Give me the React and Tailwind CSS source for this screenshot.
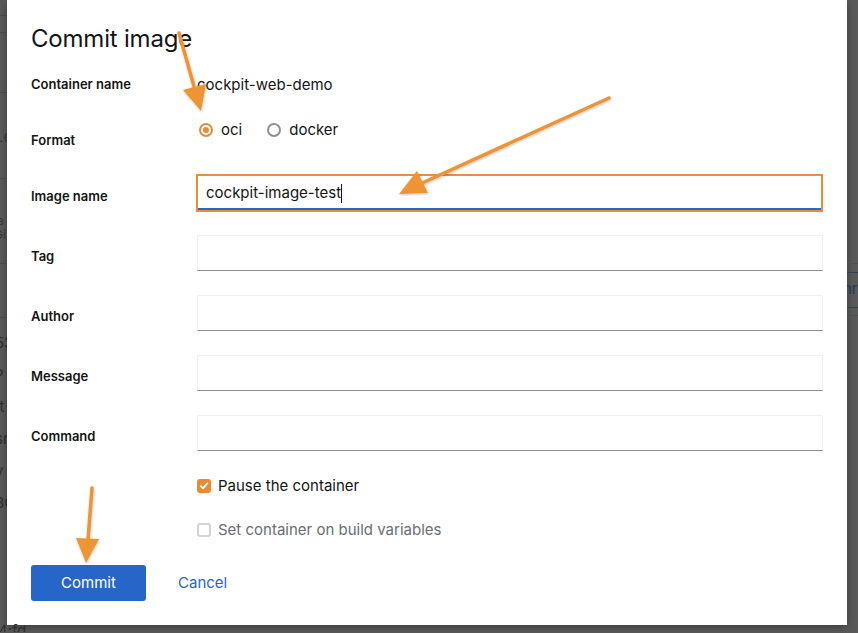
import React from 'react';

const ORANGE = '#ef9432';

function Arrows() {
    return (
        <svg
            className="absolute inset-0 pointer-events-none"
            width="858"
            height="633"
            viewBox="0 0 858 633"
        >
            <defs>
                <filter id="arrowShadow" x="-20%" y="-20%" width="140%" height="140%">
                    <feDropShadow dx="0.5" dy="1" stdDeviation="1.2" floodColor="#000" floodOpacity="0.25" />
                </filter>
            </defs>
            <g fill={ORANGE} stroke={ORANGE} strokeLinecap="round" filter="url(#arrowShadow)">
                {/* arrow to the oci radio */}
                <line x1="179" y1="33" x2="195" y2="90" strokeWidth="3.5" />
                <polygon points="201,111 206,84 183,90" stroke="none" />
                {/* arrow to the image name field */}
                <line x1="609" y1="98" x2="420" y2="184" strokeWidth="3.5" />
                <polygon points="399,194 428,193 417,171" stroke="none" />
                {/* arrow to the commit button */}
                <line x1="92" y1="488" x2="88" y2="540" strokeWidth="3.5" />
                <polygon points="86,563 99,539 76,538" stroke="none" />
            </g>
        </svg>
    );
}

// pieces of the page that show beside the modal
function LeftStrip() {
    return (
        <div className="w-[7px] shrink-0 overflow-hidden flex flex-col text-[15px] leading-5 text-[#2e2e2e]">
            <div className="mt-[15px] border-t border-[#4d4d4d]" />
            <div className="mt-[16px] border-t border-[#4d4d4d]" />
            <div className="mt-[59px] border-t border-[#4d4d4d]" />
            <div className="mt-[34px] -ml-[5px] text-[#3a3a3a]">Le</div>
            <div className="mt-[31px] border-t border-[#4d4d4d]" />
            <div className="mt-[35px] -ml-[6px] text-[12px] leading-[14px] text-[#3a3a3a] flex flex-col">
                <span>la</span>
                <span>Gi</span>
            </div>
            <div className="mt-[21px] border-t border-[#4d4d4d]" />
            <div className="mt-[53px] border-t border-[#4d4d4d]" />
            <div className="mt-[15px] flex flex-col gap-[12px] -ml-[5px]">
                <span>53</span>
                <span className="-ml-[1px]">P</span>
                <span>tt</span>
                <span>sn</span>
                <span>y</span>
                <span>3C</span>
            </div>
        </div>
    );
}

function RightStrip() {
    return (
        <div className="flex-1 overflow-hidden flex flex-col text-[15px] leading-5">
            <div className="mt-[263px] border-t border-[#4f4f4f]" />
            <div className="mt-[8px] border-t border-[#2f3f5c]" />
            <div className="mt-[6px] -ml-[4px] text-[#22375c]">nr</div>
            <div className="mt-[8px] border-t border-[#2f3f5c]" />
            <div className="mt-[7px] border-t border-[#4f4f4f]" />
        </div>
    );
}

function FieldRow({ label, value, focused }) {
    return (
        <div className="flex items-start">
            <div className={`w-[166px] shrink-0 text-[13px] leading-5 font-semibold text-[#151515] ${focused ? 'pt-[12px]' : 'pt-[11px]'}`}>
                {label}
            </div>
            {focused ? (
                <div className="-ml-[1px] w-[628px] h-[38px] border-2 border-[#ee8d36]">
                    <div className="h-full flex items-center pt-[2px] px-[8px] border-b-2 border-[#2b66c6] text-[15px] text-[#151515]">
                        {value}
                        <span className="inline-block w-px h-[19px] bg-[#151515]" />
                    </div>
                </div>
            ) : (
                <div className="w-[626px] h-[36px] border border-[#f0f0f0] border-b-[#8a8d90]" />
            )}
        </div>
    );
}

function Radio({ checked }) {
    return checked ? (
        <span className="shrink-0 w-[14px] h-[14px] rounded-full border-2 border-[#ec8a34] flex items-center justify-center">
            <span className="w-[6px] h-[6px] rounded-full bg-[#ec8a34]" />
        </span>
    ) : (
        <span className="shrink-0 block w-[14px] h-[14px] rounded-full border-2 border-[#8f8f97] bg-white" />
    );
}

function Check({ checked, label }) {
    return (
        <div className="flex items-center h-5 pl-[166px]">
            {checked ? (
                <span className="shrink-0 w-[14px] h-[14px] rounded-[3px] bg-[#ec8a34] flex items-center justify-center">
                    <svg width="10" height="10" viewBox="0 0 10 10">
                        <path d="M1.8 5.2 L4 7.4 L8.3 2.4" fill="none" stroke="white" strokeWidth="1.8" strokeLinecap="round" strokeLinejoin="round" />
                    </svg>
                </span>
            ) : (
                <span className="shrink-0 block w-[14px] h-[14px] rounded-[3px] border-2 border-[#d4d4d8] bg-white" />
            )}
            <span className={`ml-[7px] text-[15px] ${checked ? 'text-[#151515]' : 'text-[#6a6e73]'}`}>{label}</span>
        </div>
    );
}

export default function App() {
    return (
        <div className="relative w-[858px] h-[633px] overflow-hidden bg-[#5a5a5a] font-['Inter','Liberation_Sans',sans-serif] flex flex-col">
            <div className="flex h-[625px]">
                <LeftStrip />

                {/* Modal */}
                <div className="w-[840px] shrink-0 bg-white shadow-[0_2px_8px_rgba(0,0,0,0.35)] px-[24px] pt-[23px] flex flex-col">
                    <h1 className="text-[24px] leading-8 font-normal text-[#151515] tracking-[-0.2px]">Commit image</h1>

                    {/* Container name */}
                    <div className="flex items-center h-5 mt-[20px]">
                        <div className="w-[166px] text-[13px] font-semibold text-[#151515]">Container name</div>
                        <div className="text-[15px] text-[#151515]">cockpit-web-demo</div>
                    </div>

                    {/* Format */}
                    <div className="flex items-start mt-[25px]">
                        <div className="w-[166px] shrink-0 pt-[10px] text-[13px] leading-5 font-semibold text-[#151515]">Format</div>
                        <div className="flex items-center h-5 text-[15px] text-[#151515] pl-[2px]">
                            <Radio checked />
                            <span className="ml-[8px]">oci</span>
                            <span className="ml-[25px]"><Radio /></span>
                            <span className="ml-[8px]">docker</span>
                        </div>
                    </div>

                    <div className="mt-[24px] flex flex-col gap-[23px]">
                        <FieldRow label="Image name" value="cockpit-image-test" focused />
                        <div className="flex flex-col gap-[24px]">
                            <FieldRow label="Tag" />
                            <FieldRow label="Author" />
                            <FieldRow label="Message" />
                            <FieldRow label="Command" />
                        </div>
                    </div>

                    <div className="mt-[25px] flex flex-col gap-[24px]">
                        <Check checked label="Pause the container" />
                        <Check label="Set container on build variables" />
                    </div>

                    {/* Footer buttons */}
                    <div className="flex items-center gap-[32px] mt-[25px]">
                        <button className="w-[115px] h-[36px] rounded-[3px] bg-[#2766c9] text-white text-[15px] pt-[1px]">
                            Commit
                        </button>
                        <button className="text-[15px] text-[#2766c9] pt-[1px]">Cancel</button>
                    </div>
                </div>

                <RightStrip />
            </div>

            <div className="h-[8px] overflow-hidden text-[15px] leading-5 text-[#2e2e2e] -mt-[1px]">
                <span className="block -mt-[3px] -ml-[2px]">4:fd</span>
            </div>

            <Arrows />
        </div>
    );
}
